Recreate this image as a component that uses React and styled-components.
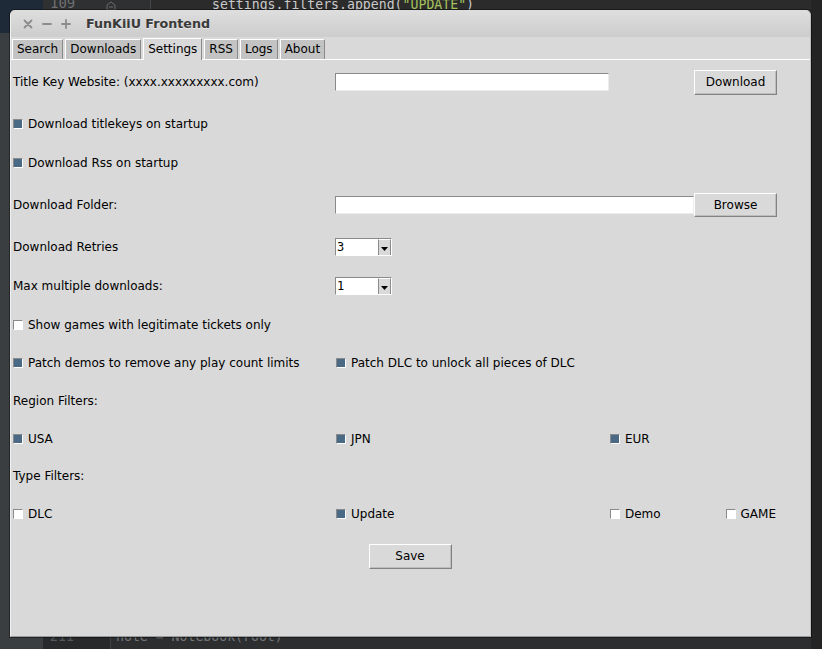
import React from 'react';
import styled, { createGlobalStyle } from 'styled-components';

const GlobalStyle = createGlobalStyle`
  html, body { margin: 0; padding: 0; background: #2b2b2b; }
  body { font-family: "DejaVu Sans", "Liberation Sans", sans-serif; }
  *, *::before, *::after { box-sizing: border-box; }
`;

const Desktop = styled.div`
  position: relative;
  width: 822px;
  height: 649px;
  overflow: hidden;
  background: #2b2b2b;
  padding: 10px 11px 12px 10px;
`;

/* ---- editor behind the window ---- */
const Backdrop = styled.div`
  position: absolute;
  inset: 0;
  z-index: 0;
`;

const NavyCorner = styled.div`
  position: absolute;
  left: 0; top: 0; width: 43px; height: 33px;
  background: #1e2a37;
`;

const LeftStrip = styled.div`
  position: absolute;
  left: 0; top: 33px; width: 43px; bottom: 0;
  background: #3b3e40;
`;

const TopGutter = styled.div`
  position: absolute;
  left: 43px; top: 0; width: 108px; height: 30px;
  background: #2f3032;
  border-right: 1px solid #464749;
`;

const RightStrip = styled.div`
  position: absolute;
  right: 0; top: 0; width: 11px; bottom: 0;
  background: #242424;
`;

const BottomGutter = styled.div`
  position: absolute;
  left: 43px; bottom: 0; width: 68px; height: 30px;
  background: #27292b;
  border-right: 1px solid #3e4042;
`;

const BottomCode = styled.div`
  position: absolute;
  left: 111px; right: 11px; bottom: 0; height: 30px;
  background: #2c2e30;
`;

const CodeText = styled.div`
  position: absolute;
  left: ${p => p.$x}px;
  top: ${p => p.$y}px;
  font-family: "DejaVu Sans Mono", "Liberation Mono", monospace;
  font-size: ${p => p.$size || 13.2}px;
  line-height: 16px;
  white-space: pre;
  color: ${p => p.$color || '#c9c9c9'};
`;

const Str = styled.span`
  color: #a6c25c;
`;

const FoldMark = styled.svg`
  position: absolute;
  left: 106px;
  top: 1px;
`;

/* ---- window ---- */
const Window = styled.div`
  position: relative;
  z-index: 1;
  width: 801px;
  height: 627px;
  display: flex;
  flex-direction: column;
  background: #d9d9d9;
  border-radius: 5px 5px 0 0;
  border-left: 1px solid #f0f0f0;
  border-right: 1px solid #bcbcbc;
  border-bottom: 1px solid #9a9a9a;
  box-shadow: 0 0 0 1px rgba(0, 0, 0, 0.4);
  overflow: hidden;
`;

const TitleBar = styled.div`
  height: 27px;
  flex: none;
  display: flex;
  align-items: center;
  padding-left: 12px;
  background: linear-gradient(#dedede, #cdcdcd);
  border-radius: 5px 5px 0 0;
`;

const WinButtons = styled.div`
  display: flex;
  align-items: center;
  gap: 9px;
  margin-right: 15px;
`;

const Title = styled.div`
  font-family: "DejaVu Sans", sans-serif;
  font-weight: bold;
  font-size: 12.7px;
  color: #3a3a3a;
  text-shadow: 0 1px 0 rgba(255, 255, 255, 0.5);
`;

const TabBar = styled.div`
  height: 23px;
  flex: none;
  display: flex;
  align-items: flex-end;
  gap: 2px;
  padding-left: 1px;
  background: #d9d9d9;
  border-bottom: 1px solid #ffffff;
`;

const Tab = styled.div`
  position: relative;
  height: ${p => (p.$active ? 22 : 20)}px;
  margin-bottom: ${p => (p.$active ? -1 : 0)}px;
  padding: 0 4px 1px;
  display: flex;
  align-items: center;
  font-size: 12px;
  color: #000;
  background: ${p => (p.$active ? '#d9d9d9' : '#c3c3c3')};
  border-top: 1px solid #ffffff;
  border-left: 1px solid #ffffff;
  border-right: 1px solid #8a8a8a;
`;

const Panel = styled.div`
  flex: 1;
  display: grid;
  padding-left: 1px;
  grid-template-columns: 323px 274px 85px 83px 1fr;
  grid-template-rows: 44px 40px 38px 46px 38px 40px 38px 38px 38px 38px 36px 40px 44px;
  align-items: center;
  font-size: 12px;
  color: #000;
`;

const Cell = styled.div`
  grid-row: ${p => p.$row};
  grid-column: ${p => p.$col} / span ${p => p.$span || 1};
  justify-self: ${p => p.$justify || 'start'};
  display: flex;
  align-items: center;
`;

const Label = styled.span`
  padding-left: 1px;
  font-size: 12px;
  line-height: 15px;
  white-space: nowrap;
`;

const CheckWrap = styled.label`
  display: inline-flex;
  align-items: center;
  gap: 5px;
  margin-left: 1px;
  margin-right: ${p => (p.$end ? 1 : 0)}px;
  font-size: 12px;
  line-height: 15px;
  white-space: nowrap;
`;

const Indicator = styled.span`
  width: 10px;
  height: 10px;
  flex: none;
  border-top: 1px solid #8a8a8a;
  border-left: 1px solid #8a8a8a;
  border-right: 1px solid #ffffff;
  border-bottom: 1px solid #ffffff;
  background: ${p => (p.$on ? '#4a6984' : '#ffffff')};
`;

const Entry = styled.div`
  width: ${p => p.$w}px;
  height: 18px;
  background: #ffffff;
  border-top: 1px solid #8a8a8a;
  border-left: 1px solid #8a8a8a;
  border-right: 1px solid #ececec;
  border-bottom: 1px solid #ececec;
`;

const Button = styled.button`
  width: 83px;
  height: ${p => p.$h || 25}px;
  margin-right: ${p => (p.$center ? 2 : 0)}px;
  padding: 0;
  background: #d9d9d9;
  border: 1px solid;
  border-color: #ffffff #828282 #828282 #ffffff;
  box-shadow: inset -1px -1px 0 #bdbdbd;
  font-family: "DejaVu Sans", sans-serif;
  font-size: 12px;
  color: #000;
`;

const Combo = styled.div`
  width: 57px;
  height: 18px;
  display: flex;
  background: #ffffff;
  border-top: 1px solid #8a8a8a;
  border-left: 1px solid #8a8a8a;
  border-right: 1px solid #ffffff;
  border-bottom: 1px solid #ffffff;
`;

const ComboValue = styled.div`
  flex: 1;
  padding-left: 1px;
  font-family: "DejaVu Sans Mono", monospace;
  font-size: 12px;
  line-height: 16px;
  color: #000;
`;

const ComboArrow = styled.div`
  width: 13px;
  display: flex;
  align-items: flex-end;
  justify-content: center;
  padding-bottom: 4px;
  background: #d9d9d9;
  border-left: 1px solid #8a8a8a;
  border-top: 1px solid #ffffff;
  border-right: 1px solid #8a8a8a;
`;

function Check({ on, end, children }) {
  return (
    <CheckWrap $end={end}>
      <Indicator $on={on} />
      <span>{children}</span>
    </CheckWrap>
  );
}

function ComboBox({ value }) {
  return (
    <Combo>
      <ComboValue>{value}</ComboValue>
      <ComboArrow>
        <svg width="7" height="4" viewBox="0 0 7 4">
          <polygon points="0,0 7,0 3.5,4" fill="#000" />
        </svg>
      </ComboArrow>
    </Combo>
  );
}

const CloseIcon = () => (
  <svg width="10" height="10" viewBox="0 0 10 10">
    <path d="M1.5 1.5 L8.5 8.5 M8.5 1.5 L1.5 8.5" stroke="#8c8c8c" strokeWidth="1.8" strokeLinecap="round" />
  </svg>
);
const MinIcon = () => (
  <svg width="10" height="10" viewBox="0 0 10 10">
    <path d="M1 5 L9 5" stroke="#8c8c8c" strokeWidth="1.8" strokeLinecap="round" />
  </svg>
);
const MaxIcon = () => (
  <svg width="10" height="10" viewBox="0 0 10 10">
    <path d="M1 5 L9 5 M5 1 L5 9" stroke="#8c8c8c" strokeWidth="1.8" strokeLinecap="round" />
  </svg>
);

const tabs = ['Search', 'Downloads', 'Settings', 'RSS', 'Logs', 'About'];

export default function App() {
  return (
    <>
      <GlobalStyle />
      <Desktop>
        <Backdrop>
          <NavyCorner />
          <LeftStrip />
          <TopGutter />
          <RightStrip />
          <BottomGutter />
          <BottomCode />
          <CodeText $x={50} $y={-5} $size={14} $color="#6d6f72">109</CodeText>
          <FoldMark width="10" height="10" viewBox="0 0 10 10">
            <path d="M1 9 L1 4 L5 1 L9 4 L9 9 Z M3 6 L7 6" stroke="#6a6c6e" strokeWidth="1" fill="none" />
          </FoldMark>
          <CodeText $x={212} $y={-3}>
            settings.filters.append(<Str>"UPDATE"</Str>)
          </CodeText>
          <CodeText $x={50} $y={629} $color="#55585a">211</CodeText>
          <CodeText $x={116} $y={629} $color="#74777a">note = Notebook(root)</CodeText>
        </Backdrop>

        <Window>
          <TitleBar>
            <WinButtons>
              <CloseIcon />
              <MinIcon />
              <MaxIcon />
            </WinButtons>
            <Title>FunKiiU Frontend</Title>
          </TitleBar>

          <TabBar>
            {tabs.map(t => (
              <Tab key={t} $active={t === 'Settings'}>{t}</Tab>
            ))}
          </TabBar>

          <Panel>
            <Cell $row={1} $col={1}><Label>Title Key Website: (xxxx.xxxxxxxxx.com)</Label></Cell>
            <Cell $row={1} $col={2}><Entry $w={274} /></Cell>
            <Cell $row={1} $col={4}><Button>Download</Button></Cell>

            <Cell $row={2} $col={1} $span={2}><Check on>Download titlekeys on startup</Check></Cell>
            <Cell $row={3} $col={1} $span={2}><Check on>Download Rss on startup</Check></Cell>

            <Cell $row={4} $col={1}><Label>Download Folder:</Label></Cell>
            <Cell $row={4} $col={2} $span={2}><Entry $w={359} /></Cell>
            <Cell $row={4} $col={4}><Button $h={24}>Browse</Button></Cell>

            <Cell $row={5} $col={1}><Label>Download Retries</Label></Cell>
            <Cell $row={5} $col={2}><ComboBox value="3" /></Cell>

            <Cell $row={6} $col={1}><Label>Max multiple downloads:</Label></Cell>
            <Cell $row={6} $col={2}><ComboBox value="1" /></Cell>

            <Cell $row={7} $col={1} $span={2}><Check>Show games with legitimate tickets only</Check></Cell>

            <Cell $row={8} $col={1}><Check on>Patch demos to remove any play count limits</Check></Cell>
            <Cell $row={8} $col={2} $span={2}><Check on>Patch DLC to unlock all pieces of DLC</Check></Cell>

            <Cell $row={9} $col={1}><Label>Region Filters:</Label></Cell>

            <Cell $row={10} $col={1}><Check on>USA</Check></Cell>
            <Cell $row={10} $col={2}><Check on>JPN</Check></Cell>
            <Cell $row={10} $col={3}><Check on>EUR</Check></Cell>

            <Cell $row={11} $col={1}><Label>Type Filters:</Label></Cell>

            <Cell $row={12} $col={1}><Check>DLC</Check></Cell>
            <Cell $row={12} $col={2}><Check on>Update</Check></Cell>
            <Cell $row={12} $col={3}><Check>Demo</Check></Cell>
            <Cell $row={12} $col={4} $justify="end"><Check end>GAME</Check></Cell>

            <Cell $row={13} $col={1} $span={5} $justify="center"><Button $h={25} $center>Save</Button></Cell>
          </Panel>
        </Window>
      </Desktop>
    </>
  );
}
